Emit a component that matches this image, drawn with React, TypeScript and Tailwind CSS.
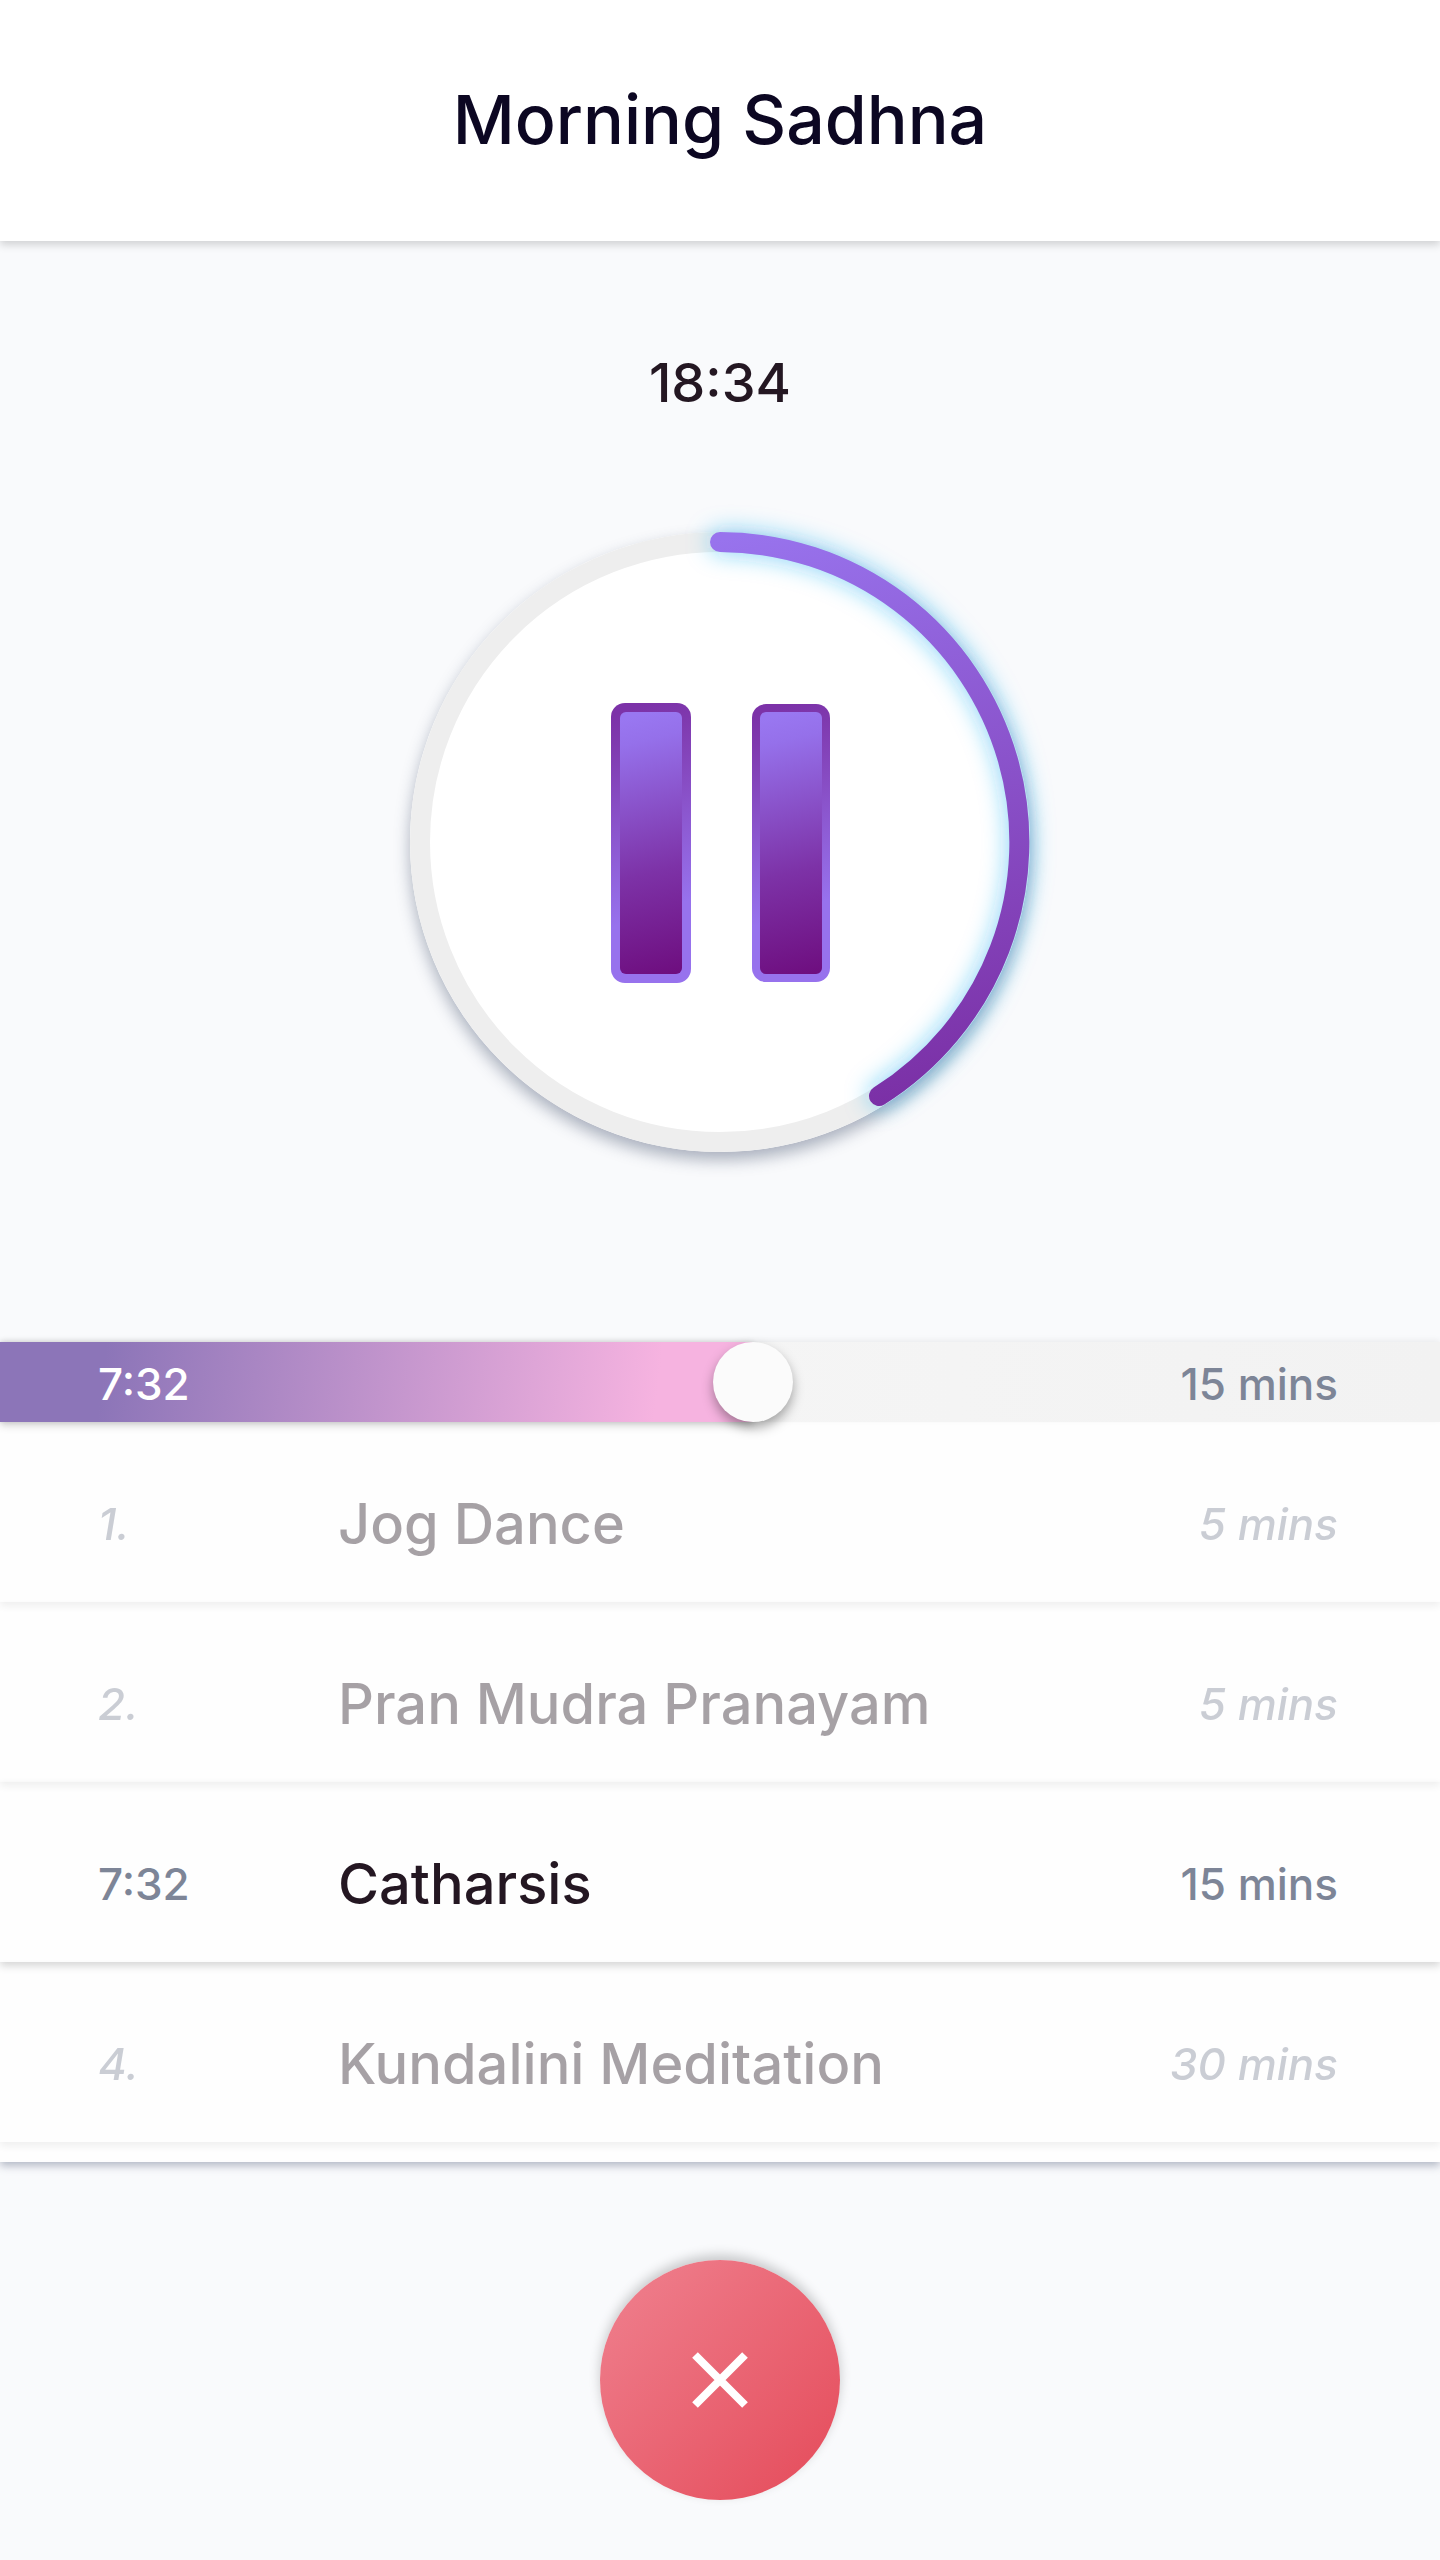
import { useState } from "react";

type Step = { marker: string; name: string; length: string; active?: boolean };

const steps: Step[] = [
  { marker: "1.", name: "Jog Dance", length: "5 mins" },
  { marker: "2.", name: "Pran Mudra Pranayam", length: "5 mins" },
  { marker: "7:32", name: "Catharsis", length: "15 mins", active: true },
  { marker: "4.", name: "Kundalini Meditation", length: "30 mins" },
];

function Header() {
  return (
    <header className="relative flex h-[241px] items-center justify-center bg-white pb-1 shadow-[0_4px_8px_rgba(0,0,0,0.16)]">
      <h1 className="text-[68px] leading-none font-medium text-[#0c0722]">Morning Sadhna</h1>
    </header>
  );
}

function PauseDial() {
  return (
    <button
      type="button"
      aria-label="Pause"
      className="size-[620px] rounded-full bg-white shadow-[0_8px_16px_rgba(50,65,95,0.4)]"
    >
      <svg viewBox="0 0 620 620" className="size-full overflow-visible" aria-hidden="true">
        <defs>
          <linearGradient id="arc" gradientUnits="userSpaceOnUse" x1="340" y1="0" x2="480" y2="570">
            <stop offset="0" stopColor="#9873ed" />
            <stop offset="1" stopColor="#7b30a6" />
          </linearGradient>
          <linearGradient id="frame" gradientUnits="objectBoundingBox" x1="0.45" y1="0" x2="0.55" y2="1">
            <stop offset="0" stopColor="#7c32a8" />
            <stop offset="0.1" stopColor="#7f39ae" />
            <stop offset="0.75" stopColor="#9772ed" />
            <stop offset="1" stopColor="#9772ed" />
          </linearGradient>
          <linearGradient id="coreLeft" gradientUnits="userSpaceOnUse" x1="210" y1="188" x2="272" y2="440">
            <stop offset="0" stopColor="#9977f1" />
            <stop offset="0.1" stopColor="#9570ea" />
            <stop offset="0.6" stopColor="#7d32a7" />
            <stop offset="1" stopColor="#6e0e7f" />
          </linearGradient>
          <linearGradient id="coreRight" gradientUnits="userSpaceOnUse" x1="350" y1="188" x2="412" y2="440">
            <stop offset="0" stopColor="#9977f1" />
            <stop offset="0.1" stopColor="#9570ea" />
            <stop offset="0.6" stopColor="#7d32a7" />
            <stop offset="1" stopColor="#6e0e7f" />
          </linearGradient>
          <filter id="glow" filterUnits="userSpaceOnUse" x="240" y="-60" width="460" height="720">
            <feGaussianBlur stdDeviation="12" />
          </filter>
        </defs>
        <circle cx="310" cy="310" r="300" fill="none" stroke="#eeeeee" strokeWidth="20" />
        <path
          d="M310 10A300 300 0 0 1 469 564"
          fill="none"
          stroke="#1eaef2"
          strokeOpacity="0.6"
          strokeWidth="20"
          strokeLinecap="round"
          filter="url(#glow)"
        />
        <path
          d="M310 10A300 300 0 0 1 469 564"
          fill="none"
          stroke="url(#arc)"
          strokeWidth="20"
          strokeLinecap="round"
        />
        <rect x="201" y="171" width="80" height="280" rx="14" fill="url(#frame)" />
        <rect x="210" y="180" width="62" height="262" rx="6" fill="url(#coreLeft)" />
        <rect x="342" y="172" width="78" height="278" rx="14" fill="url(#frame)" />
        <rect x="350" y="180" width="62" height="262" rx="6" fill="url(#coreRight)" />
      </svg>
    </button>
  );
}

function ProgressSlider() {
  const [value, setValue] = useState(52.4);
  return (
    <div className="relative z-10 h-20 bg-linear-to-r from-[#f8f8f8] to-[#f2f2f2] shadow-[0_-2px_6px_rgba(0,0,0,0.06)]">
      <div
        className="absolute inset-y-0 left-0 bg-[linear-gradient(97deg,#8c75b8_14%,#f6b3e0_87%)] shadow-[0_0_6px_rgba(0,0,0,0.12),0_4px_8px_rgba(0,0,0,0.14)]"
        style={{ width: `calc(40px + (100% - 80px) * ${value / 100})` }}
      />
      <input
        type="range"
        aria-label="Position in Catharsis"
        min={0}
        max={100}
        step={0.1}
        value={value}
        onChange={(e) => setValue(Number(e.target.value))}
        className="absolute inset-0 h-full w-full appearance-none bg-transparent [&::-webkit-slider-thumb]:size-20 [&::-webkit-slider-thumb]:appearance-none [&::-webkit-slider-thumb]:rounded-full [&::-webkit-slider-thumb]:bg-[#fbfbfb] [&::-webkit-slider-thumb]:shadow-[0_6px_12px_rgba(0,0,0,0.34)]"
      />
      <div className="pointer-events-none absolute inset-0 flex items-center justify-between pt-1 pr-[102px] pl-[98px] text-[44px] leading-none font-medium">
        <span className="text-white">7:32</span>
        <span className="text-[#7d8597]">15 mins</span>
      </div>
    </div>
  );
}

function StepRow({ marker, name, length, active }: Step) {
  return (
    <li
      className={`flex h-[180px] items-center pt-6 pr-[102px] pl-[98px] leading-none font-medium shadow-[0_4px_8px_rgba(0,0,0,0.16)] ${
        active ? "" : "opacity-40"
      }`}
    >
      <span className={`w-60 text-[44px] text-[#7d8597] ${active ? "" : "italic"}`}>{marker}</span>
      <span className="flex-1 text-[56px] text-[#241722]">{name}</span>
      <span className={`text-[44px] text-[#7d8597] ${active ? "" : "italic"}`}>{length}</span>
    </li>
  );
}

export default function App() {
  return (
    <div className="flex min-h-screen flex-col bg-[#f9fafc] font-['Inter',sans-serif]">
      <Header />
      <main className="flex flex-col">
        <section className="flex flex-col items-center pt-28 pb-[190px]">
          <time className="mb-[119px] text-[54px] leading-[60px] font-medium text-[#241722]">18:34</time>
          <PauseDial />
        </section>
        <ProgressSlider />
        <ol className="bg-[#fefefe] pb-5 shadow-[0_4px_8px_rgba(60,75,105,0.36)]">
          {steps.map((step) => (
            <StepRow key={step.name} {...step} />
          ))}
        </ol>
      </main>
      <footer className="flex justify-center pt-[98px] pb-[60px]">
        <button
          type="button"
          aria-label="Close"
          className="flex size-60 items-center justify-center rounded-full bg-[linear-gradient(135deg,#ee7a88_14%,#e65261_86%)] shadow-[0_-5px_12px_rgba(0,0,0,0.2)]"
        >
          <svg viewBox="0 0 56 56" className="size-14" aria-hidden="true">
            <path d="M3 3L53 53M53 3L3 53" stroke="#ffffff" strokeWidth="8" fill="none" />
          </svg>
        </button>
      </footer>
    </div>
  );
}
